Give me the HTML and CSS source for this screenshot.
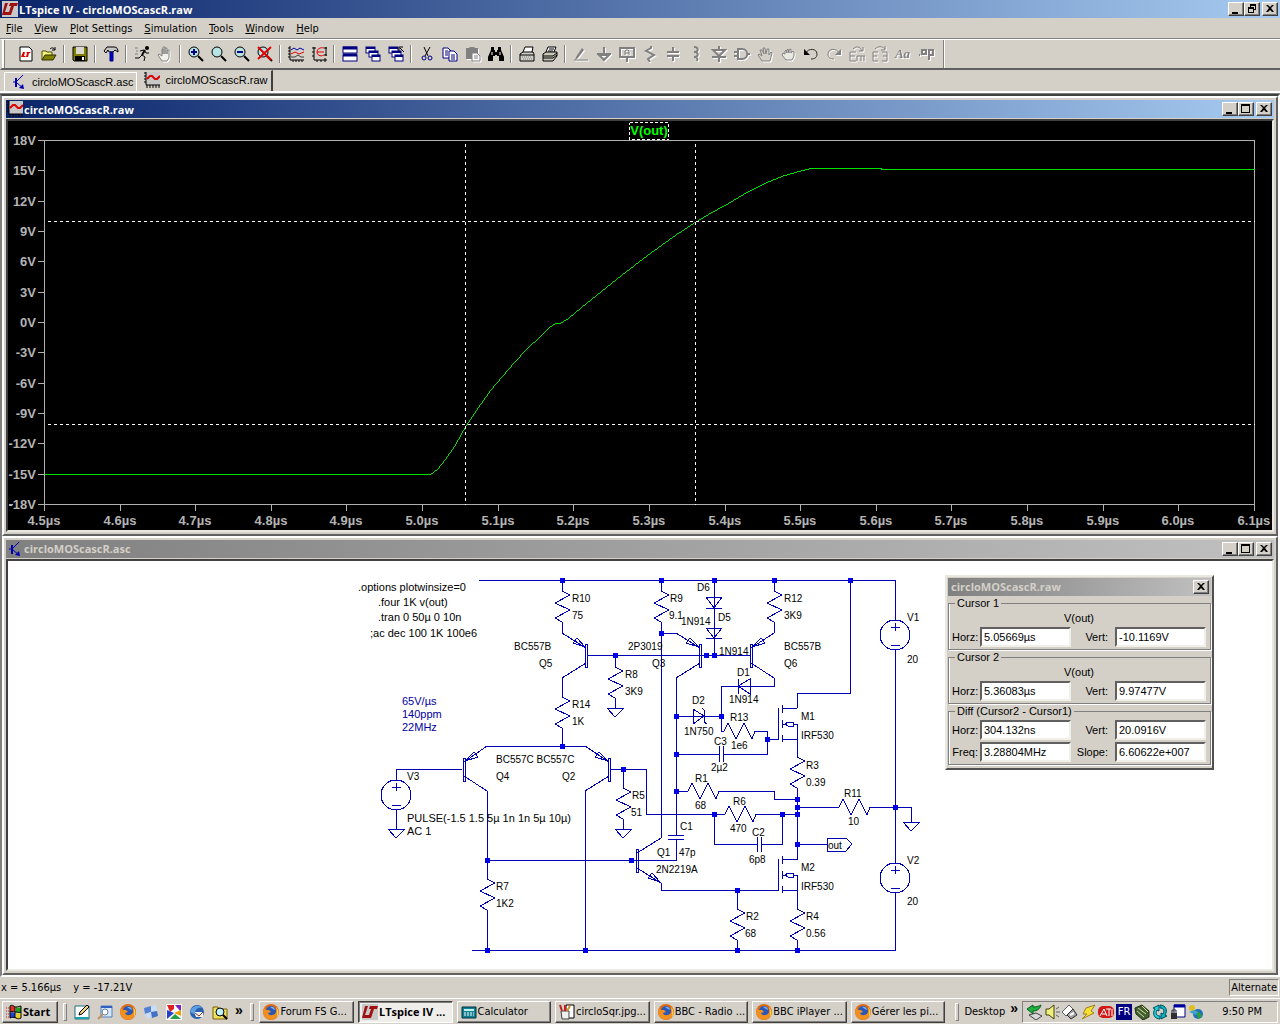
FILE: index.html
```html
<!DOCTYPE html>
<html lang="en">
<head>
    <meta charset="UTF-8">
    <meta name="viewport" content="width=device-width, initial-scale=1.0">
    <title>LTspice IV - circloMOScascR.raw</title>
    <link rel="stylesheet" href="styles.css">
</head>
<body>
    <!-- Shared shapes -->
    <svg class="defs" width="0" height="0">
        <symbol id="lt" viewBox="0 0 16 16"><rect width="16" height="16" fill="#c8c8c8"/><path d="M3 2h3L3 11h4l-1 3H0zM8 2h8l-1 3h-3l-3 9H6l3-9H7z" fill="#a01010"/></symbol>
        <symbol id="wave" viewBox="0 0 16 16"><rect x="2" width="14" height="13" fill="#c8c8c8"/><path d="M2 0v13h14M0 1h2M0 4h2M0 7h2M0 10h2M3 13v3M6 13v3M9 13v3M12 13v3M15 13v3" stroke="#000" fill="none"/><path d="M3 7l3-3h2l3 3h2l3-3" stroke="#e00000" stroke-width="2" fill="none"/></symbol>
        <symbol id="bjt" viewBox="0 0 16 16"><path d="M5 4v9" stroke="#0000b0" stroke-width="2"/><path d="M2 8h4M6 7l6-6M6 9l6 5" stroke="#0000b0" fill="none"/><path d="M13 15l-5-1 4-4z" fill="#0000b0"/></symbol>
        <symbol id="i-min" viewBox="0 0 12 10"><path d="M2 8h6v2H2z"/></symbol>
        <symbol id="i-max" viewBox="0 0 12 10"><path d="M1 0h9v9H1zM2 2v6h7V2z" fill-rule="evenodd"/></symbol>
        <symbol id="i-restore" viewBox="0 0 12 10"><path d="M4 0h6v6H8V5h1V2H5v1H4zM2 3h6v6H2zM3 5v3h4V5z" fill-rule="evenodd"/></symbol>
        <symbol id="i-close" viewBox="0 0 12 10"><path d="M2 1h2l2 2 2-2h2L7 4l3 4H8L6 6 4 8H2l3-4z"/></symbol>
        <symbol id="fox" viewBox="0 0 16 16"><circle cx="8" cy="8" r="8" fill="#e06a10"/><circle cx="8" cy="7" r="5" fill="#2a58b8"/><path d="M7 3c3-1 5 1 5 3l-2-1z" fill="#7ab4f0"/><path d="M1 4l2 2 3 0 2 2-3 1c1 3 5 3 8 0 1-2 1-4 0-6 3 3 3 8 0 11-4 3-10 2-12-2C0 9 0 6 1 4z" fill="#f09020"/><path d="M13 3c3 3 3 7 1 10 0-4 0-7-1-10z" fill="#ffd040"/></symbol>
        <symbol id="mag" viewBox="0 0 16 16"><circle cx="6" cy="6" r="5" fill="#b8e4e4" stroke="#000"/><path d="M10 10l5 5" stroke="#000" stroke-width="2"/></symbol>
        <symbol id="cascade" viewBox="0 0 16 16"><g fill="#fff" stroke="#000080"><rect x="1" y="1" width="9" height="6"/><path d="M1 2h9" stroke-width="2"/><rect x="4" y="5" width="9" height="6"/><path d="M4 6h9" stroke-width="2"/><rect x="7" y="9" width="8" height="6"/><path d="M7 10h8" stroke-width="2"/></g></symbol>
        <symbol id="hand" viewBox="0 0 16 16"><path d="M5 15L1 9l1-1 3 2-2-6 2 0 2 4-1-6h2l1 6 1-5h2l0 6 2-3 1 1-2 8z" fill="#d4d0c8" stroke="#808080"/></symbol>
        <symbol id="res-v" overflow="visible"><path d="M0 0L8 4L-7 12L8 19L-7 27L0 31"/></symbol>
        <symbol id="res-h" overflow="visible"><path d="M0 0L4 -8L12 8L20 -8L28 8L31 0"/></symbol>
        <symbol id="gnd" overflow="visible"><path d="M-8 0H9L0 9Z"/></symbol>
        <symbol id="bar" overflow="visible"><path d="M-1 -11H1V12H-1Z"/></symbol>
        <symbol id="src" overflow="visible"><circle r="15"/><path d="M-4 -8H5M0 -12V-4M-4 10H5"/></symbol>
        <symbol id="mos" overflow="visible"><path d="M-19 -16V15H-30M-15 -19V-11M-15 -4V4M-15 11V18M-15 -16H0M-15 15H0V0H-4M-15 0H-10M-12 0L-9 -2H-4V2H-9Z"/></symbol>
    </svg>

    <header class="titlebar">
        <svg class="icon"><use href="#lt"/></svg>
        <span class="title">LTspice IV - circloMOScascR.raw</span>
        <button class="ctl" aria-label="Minimize"><svg><use href="#i-min"/></svg></button>
        <button class="ctl" aria-label="Restore"><svg><use href="#i-restore"/></svg></button>
        <button class="ctl ctl-close" aria-label="Close"><svg><use href="#i-close"/></svg></button>
    </header>

    <nav class="menubar">
        <button><u>F</u>ile</button>
        <button><u>V</u>iew</button>
        <button><u>P</u>lot Settings</button>
        <button><u>S</u>imulation</button>
        <button><u>T</u>ools</button>
        <button><u>W</u>indow</button>
        <button><u>H</u>elp</button>
    </nav>

    <!-- Toolbar -->
    <div class="toolbar">
        <button aria-label="New schematic"><svg viewBox="0 0 16 16"><path d="M2 1h9l3 3v11H2z" fill="#fff" stroke="#000"/><path d="M5 6h2l-1 4h2l-1 1H3zM8 6h5l-1 1h-1l-1 4H8l1-4z" fill="#e00000"/></svg></button>
        <button aria-label="Open"><svg viewBox="0 0 16 16"><path d="M1 14V5h4l1 1h5v3" fill="#f0f080" stroke="#505000"/><path d="M1 14l3-5h11l-3 5z" fill="#808000" stroke="#303000"/><path d="M9 3c2-2 4-1 5 1M14 1v3h-3" fill="none" stroke="#000"/></svg></button>
        <span class="sep"></span>
        <button aria-label="Save"><svg viewBox="0 0 16 16"><path d="M1 1h14v14H2l-1-1z" fill="#808000" stroke="#000"/><path d="M4 1h8v7H4z" fill="#d8d8d0"/><path d="M3 10h10v5H3z" fill="#000"/><path d="M10 11h2v3h-2z" fill="#fff"/></svg></button>
        <span class="sep"></span>
        <button aria-label="Control panel"><svg viewBox="0 0 16 16"><path d="M1 5l3-4h7c3 0 4 2 4 5l-3-2-2 2H6L5 4 3 7z" fill="#c8c8c8" stroke="#000"/><path d="M7 6h3v9H7z" fill="#0000d0" stroke="#000080"/></svg></button>
        <span class="sep"></span>
        <button aria-label="Run"><svg viewBox="0 0 16 16"><circle cx="13" cy="2" r="2"/><path d="M11 4L8 9" stroke="#000" stroke-width="2"/><path d="M6 5l4-1 2 3h3M8 9l3 2-1 4M8 9l-3 3H1" fill="none" stroke="#000"/><path d="M1 2h3M2 5h2M1 8h3" stroke="#808080"/></svg></button>
        <button class="off" aria-label="Halt"><svg viewBox="0 0 16 16"><path d="M5 15L1 9l1-1 3 2V3h1v5V1h2v7-6h2v6-4h2v8l-2 3z" fill="#f0f0e8" stroke="#808080"/></svg></button>
        <span class="sep"></span>
        <button aria-label="Zoom in"><svg viewBox="0 0 16 16"><use href="#mag"/><path d="M3 6h6M6 3v6" stroke="#000080" stroke-width="2"/></svg></button>
        <button aria-label="Pan"><svg viewBox="0 0 16 16"><use href="#mag"/></svg></button>
        <button aria-label="Zoom back"><svg viewBox="0 0 16 16"><use href="#mag"/><path d="M3 6h6" stroke="#000080" stroke-width="2"/></svg></button>
        <button aria-label="Zoom full extents"><svg viewBox="0 0 16 16"><use href="#mag"/><path d="M1 1l13 13M14 1L1 13" stroke="#e00000" stroke-width="2"/></svg></button>
        <span class="sep"></span>
        <button aria-label="Autorange"><svg viewBox="0 0 16 16"><path d="M2 0v14h14M0 2h2M0 5h2M0 8h2M0 11h2M5 14v2M8 14v2M11 14v2M14 14v2" fill="none" stroke="#000"/><path d="M3 4l3-2 3 2 3-2 4 2" fill="none" stroke="#0000b0"/><path d="M3 8l4-2 4 2 5-2" fill="none" stroke="#e00000"/><path d="M3 11h4l3-2 3 2h3" fill="none" stroke="#404040"/></svg></button>
        <button aria-label="Set limits"><svg viewBox="0 0 16 16"><path d="M3 1v13h13M1 2h4M1 6h2M1 10h2M6 14v2M10 14v2M14 12v4M15 1v9M13 2h3M13 9h3" fill="none" stroke="#000"/><path d="M13 2c-4-1-7 1-7 4s3 5 7 3M6 6h7" fill="none" stroke="#e00000"/></svg></button>
        <span class="sep"></span>
        <button aria-label="Tile windows"><svg viewBox="0 0 16 16"><g fill="#fff" stroke="#000080"><rect x="1" y="1" width="14" height="6"/><path d="M1 2h14" stroke-width="3"/><rect x="1" y="9" width="14" height="6"/><path d="M1 9h14" stroke-width="3"/></g></svg></button>
        <button aria-label="Cascade windows"><svg viewBox="0 0 16 16"><use href="#cascade"/></svg></button>
        <button aria-label="Close all"><svg viewBox="0 0 16 16"><use href="#cascade"/><path d="M16 6l-4-4M11 5V1h4" fill="none" stroke="#000"/></svg></button>
        <span class="sep"></span>
        <button aria-label="Cut"><svg viewBox="0 0 16 16"><path d="M5 1l4 9M11 1L6 10" stroke="#000"/><circle cx="5" cy="12" r="2" fill="none" stroke="#000080"/><circle cx="11" cy="12" r="2" fill="none" stroke="#000080"/></svg></button>
        <button aria-label="Copy"><svg viewBox="0 0 16 16"><g fill="#fff" stroke="#000080"><path d="M1 2h5l3 3v7H1z"/><path d="M7 5h5l3 3v7H7z"/></g><path d="M3 5h3M3 7h3M3 9h3M9 9h4M9 11h4M9 13h4" stroke="#000080"/></svg></button>
        <button class="off" aria-label="Paste"><svg viewBox="0 0 16 16"><path d="M1 2h3l1-1h4l1 1h3v11H1z" fill="#808080"/><path d="M7 7h5l3 3v5H7z" fill="#fff" stroke="#808080"/><path d="M9 10h4M9 12h4" stroke="#808080"/></svg></button>
        <button aria-label="Find"><svg viewBox="0 0 16 16"><path d="M3 1h3v3h1v2h2V4h1V1h3v3l3 7v4h-5v-5H9V9H7v1H5v5H0v-4l3-7z"/><path d="M4 6v3M12 6v3" stroke="#fff"/></svg></button>
        <span class="sep"></span>
        <button aria-label="Print setup"><svg viewBox="0 0 16 16"><path d="M4 6l2-5h8l-1 5" fill="#fff" stroke="#000"/><path d="M1 8l3-2h10l1 2v7H1z" fill="#d0d0c8" stroke="#000"/><path d="M1 9h14" stroke="#000"/><path d="M3 11h10M4 13h9" stroke="#808080" stroke-dasharray="1 1"/></svg></button>
        <button aria-label="Print"><svg viewBox="0 0 16 16"><path d="M4 6l2-5h8l-2 5" fill="#fff" stroke="#000"/><path d="M1 8l3-2h11v4l-4 5H1z" fill="#c8c8b8" stroke="#000"/><path d="M1 10h10l4-3M1 12h10l4-3" fill="none" stroke="#000"/><path d="M7 3h5M6 5h5" stroke="#000"/></svg></button>
        <span class="sep"></span>
        <button class="off" aria-label="Wire"><svg viewBox="0 0 16 16"><path d="M3 11l6-9 2 2-6 8-3 2z" fill="#808080"/><path d="M1 14h14" stroke="#808080"/></svg></button>
        <button class="off" aria-label="Ground"><svg viewBox="0 0 16 16"><path d="M8 1v7M1 8h14M3 9h10l-5 5z" fill="none" stroke="#808080" stroke-width="2"/></svg></button>
        <button class="off" aria-label="Label net"><svg viewBox="0 0 16 16"><path d="M1 2h14v9H1zM8 11v5" fill="none" stroke="#808080" stroke-width="2"/><path d="M6 9V5l1-1h2l1 1v4M6 7h4" fill="none" stroke="#808080"/></svg></button>
        <button class="off" aria-label="Resistor"><svg viewBox="0 0 16 16"><path d="M9 0v2L4 5l8 4-6 4 2 3" fill="none" stroke="#808080" stroke-width="2"/></svg></button>
        <button class="off" aria-label="Capacitor"><svg viewBox="0 0 16 16"><path d="M8 1v5M8 10v5M2 6h12M2 10h12" stroke="#808080" stroke-width="2"/></svg></button>
        <button class="off" aria-label="Inductor"><svg viewBox="0 0 16 16"><path d="M6 1c5 0 5 5 0 5 5 0 5 5 0 5 3 0 4 2 3 4" fill="none" stroke="#808080" stroke-width="2"/></svg></button>
        <button class="off" aria-label="Diode"><svg viewBox="0 0 16 16"><path d="M8 0v4M2 4h12l-6 6zM1 11h14M8 11v5" fill="none" stroke="#808080" stroke-width="2"/></svg></button>
        <button class="off" aria-label="Component"><svg viewBox="0 0 16 16"><path d="M4 3h4c7 0 7 10 0 10H4zM0 6h4M0 10h4M13 8h3" fill="none" stroke="#808080" stroke-width="2"/></svg></button>
        <button class="off" aria-label="Move"><svg viewBox="0 0 16 16"><use href="#hand"/></svg></button>
        <button class="off" aria-label="Drag"><svg viewBox="0 0 16 16"><path d="M6 14L2 9l1-2 2 1V5l1-1 1 3V4l1-1 1 4V4l2-1v4l1-2 2 1v4l-2 4z" fill="#e8e8e0" stroke="#808080"/></svg></button>
        <button aria-label="Undo"><svg viewBox="0 0 16 16"><path d="M3 7c2-5 11-5 11 1 0 4-3 5-6 5" fill="none" stroke="#303020"/><path d="M1 3v6h6z"/></svg></button>
        <button class="off" aria-label="Redo"><svg viewBox="0 0 16 16"><path d="M13 7C11 2 2 2 2 8c0 4 3 5 6 5" fill="none" stroke="#808080"/><path d="M15 3v6H9z" fill="#808080"/></svg></button>
        <button class="off" aria-label="Rotate"><svg viewBox="0 0 16 16"><path d="M7 6H1v9h6M1 10h5M8 10h8M8 10v5M12 10v5M15 10v5M4 3c3-3 7-3 9 2M14 1v4h-4" fill="none" stroke="#808080"/></svg></button>
        <button class="off" aria-label="Mirror"><svg viewBox="0 0 16 16"><path d="M6 6H1v9h5M1 10h4M10 6h5v9h-5M15 10h-4M3 3c3-3 7-3 10 0M13 0v4h-4" fill="none" stroke="#808080"/></svg></button>
        <button class="off aa">Aa</button>
        <button class="off" aria-label="SPICE directive"><svg viewBox="0 0 16 16"><path d="M1 9h1M4 4h4v4H4zM11 14V4h4v5h-4" fill="none" stroke="#808080" stroke-width="2"/></svg></button>
        <span class="sep sep-end"></span>
    </div>

    <div class="tabs">
        <button class="tab"><svg class="icon"><use href="#bjt"/></svg>circloMOScascR.asc</button>
        <button class="tab active"><svg class="icon"><use href="#wave"/></svg>circloMOScascR.raw</button>
    </div>

    <main class="mdi">
        <!-- Waveform window -->
        <section class="window win-plot">
            <div class="titlebar">
                <svg class="icon"><use href="#wave"/></svg>
                <span class="title">circloMOScascR.raw</span>
                <button class="ctl" aria-label="Minimize"><svg><use href="#i-min"/></svg></button>
                <button class="ctl" aria-label="Maximize"><svg><use href="#i-max"/></svg></button>
                <button class="ctl ctl-close" aria-label="Close"><svg><use href="#i-close"/></svg></button>
            </div>
            <div class="client">
                <svg class="plot" viewBox="7 120 1264 409" preserveAspectRatio="xMinYMin meet">
                    <path class="axis" d="M37 140H1254V504H8M44 140V510M1254 504V510M37 170H44M37 201H44M37 231H44M37 261H44M37 292H44M37 322H44M37 352H44M37 383H44M37 413H44M37 443H44M37 474H44M120 504V510M195 504V510M271 504V510M346 504V510M422 504V510M498 504V510M573 504V510M649 504V510M725 504V510M800 504V510M876 504V510M951 504V510M1027 504V510M1103 504V510M1178 504V510"/>
                    <g class="ylabels">
                        <text x="35" y="144">18V</text>
                        <text x="35" y="174">15V</text>
                        <text x="35" y="205">12V</text>
                        <text x="35" y="235">9V</text>
                        <text x="35" y="265">6V</text>
                        <text x="35" y="296">3V</text>
                        <text x="35" y="326">0V</text>
                        <text x="35" y="356">-3V</text>
                        <text x="35" y="387">-6V</text>
                        <text x="35" y="417">-9V</text>
                        <text x="35" y="447">-12V</text>
                        <text x="35" y="478">-15V</text>
                        <rect x="12" y="500" width="25" height="8"/>
                        <text x="35" y="508">-18V</text>
                    </g>
                    <g class="xlabels">
                        <text x="43" y="524">4.5µs</text>
                        <text x="119" y="524">4.6µs</text>
                        <text x="194" y="524">4.7µs</text>
                        <text x="270" y="524">4.8µs</text>
                        <text x="345" y="524">4.9µs</text>
                        <text x="421" y="524">5.0µs</text>
                        <text x="497" y="524">5.1µs</text>
                        <text x="572" y="524">5.2µs</text>
                        <text x="648" y="524">5.3µs</text>
                        <text x="724" y="524">5.4µs</text>
                        <text x="799" y="524">5.5µs</text>
                        <text x="875" y="524">5.6µs</text>
                        <text x="950" y="524">5.7µs</text>
                        <text x="1026" y="524">5.8µs</text>
                        <text x="1102" y="524">5.9µs</text>
                        <text x="1177" y="524">6.0µs</text>
                        <text x="1253" y="524">6.1µs</text>
                    </g>
                    <path class="trace" d="M44 474H428L432 472L437 468L444 459L452 448L459 436L465 425L472 415L480 403L490 389L502 375L514 361L526 348L538 337L548 327L554 323L560 322L567 318L580 307L600 291L625 271L650 252L675 234L695 221L710 212L725 204L745 192L765 182L782 175L800 170L808 168H881V169H1254"/>
                    <path class="cursor" d="M465 143V504M695 143V504M47 221H1254M47 424H1254"/>
                    <rect class="trace-box" x="629" y="122" width="39" height="17"/>
                    <text class="trace-name" x="648" y="134">V(out)</text>
                </svg>
            </div>
        </section>

        <!-- Schematic window -->
        <section class="window win-schematic">
            <div class="titlebar inactive">
                <svg class="icon"><use href="#bjt"/></svg>
                <span class="title">circloMOScascR.asc</span>
                <button class="ctl" aria-label="Minimize"><svg><use href="#i-min"/></svg></button>
                <button class="ctl" aria-label="Maximize"><svg><use href="#i-max"/></svg></button>
                <button class="ctl ctl-close" aria-label="Close"><svg><use href="#i-close"/></svg></button>
            </div>
            <div class="client">
                <svg class="schematic" viewBox="8 561 1264 408" preserveAspectRatio="xMinYMin meet">
                    <g class="wires">
                        <path d="M479 580H895V620M895 650V863M895 893V950H472"/>
                        <path d="M562 580V591M562 622V633L586 648M586 663L562 678V697M562 728V746M487 746H585L609 762M464 762L487 746"/>
                        <path d="M587 655H750M615 655V667M615 698V708"/>
                        <path d="M661 580V591M661 622V838L637 853M661 633H676L700 648M700 663L676 678V835M676 839V860H487"/>
                        <path d="M714 580V655M774 580V591M774 622V633L751 648M751 663L774 678V686H721V731H724M755 731H767V754H723M719 754H676M767 739H778M676 716H721"/>
                        <path d="M797 708V693H850V580M797 739V757M797 788V860"/>
                        <path d="M396 780V769H462M396 810V829M464 776L487 791V879M487 910V950M609 776L585 791V950"/>
                        <path d="M610 769H646V814H725M756 814H797M623 769V788M623 819V829"/>
                        <path d="M637 868L661 883V890H778M737 890V909M737 940V950M797 890V909M797 940V950"/>
                        <path d="M676 791H688M719 791H774V799H797M714 814V844H757M761 844H782V814"/>
                        <path d="M797 807H839M870 807H911V822M797 844H827"/>
                    </g>
                    <g class="parts">
                        <use href="#res-v" x="562" y="591"/><use href="#res-v" x="562" y="697"/>
                        <use href="#res-v" x="661" y="591"/><use href="#res-v" x="774" y="591"/>
                        <use href="#res-v" x="615" y="667"/><use href="#res-v" x="623" y="788"/>
                        <use href="#res-v" x="487" y="879"/><use href="#res-v" x="797" y="757"/>
                        <use href="#res-v" x="737" y="909"/><use href="#res-v" x="797" y="909"/>
                        <use href="#res-h" x="724" y="731"/><use href="#res-h" x="688" y="791"/>
                        <use href="#res-h" x="725" y="814"/><use href="#res-h" x="839" y="807"/>
                        <use href="#gnd" x="615" y="708"/><use href="#gnd" x="623" y="829"/>
                        <use href="#gnd" x="396" y="829"/><use href="#gnd" x="911" y="822"/>
                        <use href="#bar" x="586" y="655"/><use href="#bar" x="700" y="655"/>
                        <use href="#bar" x="751" y="655"/><use href="#bar" x="464" y="769"/>
                        <use href="#bar" x="609" y="769"/><use href="#bar" x="637" y="860"/>
                        <use href="#src" x="396" y="795"/><use href="#src" x="895" y="635"/>
                        <use href="#src" x="895" y="878"/>
                        <use href="#mos" x="797" y="724"/><use href="#mos" x="797" y="875"/>
                        <!-- emitter arrows -->
                        <path d="M585 647L573 643L577 638ZM699 647L686 643L690 638ZM752 647L765 643L761 638ZM465 761L478 757L474 752ZM608 761L595 757L599 752ZM660 882L648 878L652 873Z"/>
                        <!-- diodes -->
                        <path d="M706 597H722L714 608ZM706 608H722M706 628H722L714 638ZM706 638H722M750 679V694L738 686ZM738 679V694M693 709V724L704 716ZM702 708L704 710V722L707 724"/>
                        <!-- capacitors and port -->
                        <path d="M719 746V762M723 746V762M757 837V852M761 837V852M668 835H684M668 839H684M827 838H846L852 844L846 851H827Z"/>
                    </g>
                    <path class="nodes" d="M562 580h0M661 580h0M714 580h0M774 580h0M850 580h0M661 633h0M615 655h0M706 655h0M714 655h0M676 716h0M721 716h0M767 739h0M676 754h0M562 746h0M623 769h0M676 791h0M797 799h0M797 807h0M895 807h0M797 814h0M714 814h0M782 814h0M797 844h0M487 860h0M631 860h0M737 890h0M487 950h0M585 950h0M737 950h0M797 950h0"/>
                    <g class="directives">
                        <text x="358" y="591">.options plotwinsize=0</text>
                        <text x="378" y="606">.four 1K v(out)</text>
                        <text x="378" y="621">.tran 0 50µ 0 10n</text>
                        <text x="370" y="637">;ac dec 100 1K 100e6</text>
                        <text x="407" y="822">PULSE(-1.5 1.5 5µ 1n 1n 5µ 10µ)</text>
                        <text x="407" y="835">AC 1</text>
                    </g>
                    <g class="notes">
                        <text x="402" y="705">65V/µs</text>
                        <text x="402" y="718">140ppm</text>
                        <text x="402" y="731">22MHz</text>
                    </g>
                    <g class="labels">
                        <text x="572" y="602">R10</text><text x="572" y="619">75</text>
                        <text x="514" y="650">BC557B</text><text x="539" y="667">Q5</text>
                        <text x="572" y="708">R14</text><text x="572" y="725">1K</text>
                        <text x="670" y="602">R9</text><text x="669" y="619">9.1</text>
                        <text x="697" y="591">D6</text><text x="681" y="625">1N914</text>
                        <text x="718" y="621">D5</text><text x="719" y="655">1N914</text>
                        <text x="784" y="602">R12</text><text x="784" y="619">3K9</text>
                        <text x="784" y="650">BC557B</text><text x="784" y="667">Q6</text>
                        <text x="628" y="650">2P3019</text><text x="652" y="667">Q3</text>
                        <text x="625" y="678">R8</text><text x="625" y="695">3K9</text>
                        <text x="737" y="676">D1</text><text x="729" y="703">1N914</text>
                        <text x="692" y="704">D2</text><text x="684" y="735">1N750</text>
                        <text x="730" y="721">R13</text><text x="731" y="749">1e6</text>
                        <text x="714" y="745">C3</text><text x="711" y="771">2µ2</text>
                        <text x="801" y="720">M1</text><text x="801" y="739">IRF530</text>
                        <text x="806" y="769">R3</text><text x="806" y="786">0.39</text>
                        <text x="407" y="780">V3</text>
                        <text x="496" y="763">BC557C BC557C</text>
                        <text x="496" y="780">Q4</text><text x="562" y="780">Q2</text>
                        <text x="632" y="799">R5</text><text x="631" y="816">51</text>
                        <text x="496" y="890">R7</text><text x="496" y="907">1K2</text>
                        <text x="657" y="856">Q1</text><text x="656" y="873">2N2219A</text>
                        <text x="695" y="782">R1</text><text x="695" y="809">68</text>
                        <text x="733" y="805">R6</text><text x="730" y="832">470</text>
                        <text x="752" y="836">C2</text><text x="749" y="863">6p8</text>
                        <text x="680" y="830">C1</text><text x="679" y="856">47p</text>
                        <text x="844" y="797">R11</text><text x="848" y="825">10</text>
                        <text x="828" y="849">out</text>
                        <text x="801" y="871">M2</text><text x="801" y="890">IRF530</text>
                        <text x="746" y="920">R2</text><text x="745" y="937">68</text>
                        <text x="806" y="920">R4</text><text x="806" y="937">0.56</text>
                        <text x="907" y="621">V1</text><text x="907" y="663">20</text>
                        <text x="907" y="864">V2</text><text x="907" y="905">20</text>
                    </g>
                </svg>

                <!-- Cursor readout -->
                <form class="dialog">
                    <div class="titlebar inactive">
                        <span class="title">circloMOScascR.raw</span>
                        <button type="button" class="ctl" aria-label="Close"><svg><use href="#i-close"/></svg></button>
                    </div>
                    <fieldset>
                        <legend>Cursor 1</legend>
                        <span class="signal">V(out)</span>
                        <label for="h1">Horz:</label><input id="h1" value="5.05669µs">
                        <label for="v1">Vert:</label><input id="v1" value="-10.1169V">
                    </fieldset>
                    <fieldset>
                        <legend>Cursor 2</legend>
                        <span class="signal">V(out)</span>
                        <label for="h2">Horz:</label><input id="h2" value="5.36083µs">
                        <label for="v2">Vert:</label><input id="v2" value="9.97477V">
                    </fieldset>
                    <fieldset>
                        <legend>Diff (Cursor2 - Cursor1)</legend>
                        <label for="hd">Horz:</label><input id="hd" value="304.132ns">
                        <label for="vd">Vert:</label><input id="vd" value="20.0916V">
                        <label for="fd">Freq:</label><input id="fd" value="3.28804MHz">
                        <label for="sd">Slope:</label><input id="sd" value="6.60622e+007">
                    </fieldset>
                </form>
            </div>
        </section>
    </main>

    <div class="statusbar">
        <span>x = 5.166µs</span>
        <span>y = -17.21V</span>
        <span class="mode">Alternate</span>
    </div>

    <footer class="taskbar">
        <button class="start"><svg class="icon" viewBox="0 0 16 16"><path d="M4 3c2-2 4-1 5 0v5c-2-1-3-1-5 0z" fill="#e03020"/><path d="M10 3c2 1 3 1 5 0v5c-2 1-3 1-5 0z" fill="#20a020"/><path d="M4 9c2-1 3-1 5 0v5c-2-1-3-1-5 0z" fill="#2040d0"/><path d="M10 9c2 1 3 1 5 0v5c-2 1-3 1-5 0z" fill="#e8d020"/><path d="M4 2c3-2 4 1 6 1s4-1 5-1v12c-2 1-3 1-5 0s-4-1-6 0zM9 3v11M4 8c3-1 4 0 6 0s3 1 5 0" fill="none" stroke="#000"/><path d="M0 4h3M0 7h3M0 10h3M0 13h3" stroke="#c02020" stroke-dasharray="1 1"/></svg>Start</button>
        <span class="grip"></span>
        <div class="quick">
            <button aria-label="Show desktop"><svg viewBox="0 0 16 16"><path d="M1 2h14v13H1z" fill="#fff" stroke="#207080"/><path d="M1 13h14v2H1z" fill="#20a0b0"/><path d="M5 11l1-3 7-7 2 2-7 7z" fill="#f0d080" stroke="#000"/></svg></button>
            <button aria-label="Search"><svg viewBox="0 0 16 16"><path d="M4 2h11v11H4z" fill="#d8e8f8" stroke="#5080c0"/><path d="M4 3h11" stroke="#3060c0" stroke-width="2"/><circle cx="8" cy="8" r="3" fill="#fff" stroke="#6080a0"/><path d="M6 10l-5 5" stroke="#c09060" stroke-width="2"/></svg></button>
            <button aria-label="Firefox"><svg><use href="#fox"/></svg></button>
            <button aria-label="Tiles"><svg viewBox="0 0 16 16"><path d="M1 4l7-2v6l-6 2z" fill="#5080d8"/><path d="M8 2l5-1 1 6-6 1z" fill="#c8dcf8"/><path d="M2 10l6-2 1 5-5 2z" fill="#c8dcf8"/><path d="M8 8l6-1 1 5-6 2z" fill="#4070c8"/></svg></button>
            <button aria-label="Colours"><svg viewBox="0 0 16 16"><path d="M0 0h16v16H0z" fill="#fff"/><path d="M1 1h7v4L4 8z" fill="#e02020"/><path d="M9 1h6v7z" fill="#8020c0"/><path d="M1 6l7 3-7 6z" fill="#2040d0"/><path d="M8 9l7-3v6z" fill="#f0a000"/><path d="M4 15l5-5 6 5z" fill="#20a040"/></svg></button>
            <button aria-label="Mail"><svg viewBox="0 0 16 16"><circle cx="8" cy="8" r="7" fill="#2860b0"/><path d="M5 8h9v5H7z" fill="#f0f0f0"/><path d="M1 7c2-5 9-7 12-3-5-1-7 2-7 6-2 0-4-1-5-3z" fill="#60a0e0"/><path d="M6 9l4 3 4-4" fill="none" stroke="#804020"/></svg></button>
            <button aria-label="Find files"><svg viewBox="0 0 16 16"><path d="M1 3h5l1 2h8v10H1z" fill="#f0e060" stroke="#806000"/><circle cx="8" cy="8" r="4" fill="#c0f0f8" stroke="#000"/><path d="M11 11l4 4" stroke="#000" stroke-width="2"/></svg></button>
            <button class="more">»</button>
        </div>
        <span class="grip"></span>
        <div class="tasks">
            <button class="task"><svg class="icon"><use href="#fox"/></svg>Forum FS G...</button>
            <button class="task active"><svg class="icon"><use href="#lt"/></svg>LTspice IV ...</button>
            <button class="task"><svg class="icon" viewBox="0 0 16 16"><path d="M1 3h14v11H1z" fill="#108090" stroke="#003040"/><path d="M3 5h10v2H3z" fill="#c0f0f0"/><path d="M3 9h10M3 11h10" stroke="#fff" stroke-dasharray="2 1"/></svg>Calculator</button>
            <button class="task"><svg class="icon" viewBox="0 0 16 16"><path d="M7 1h8v13H7z" fill="#fff" stroke="#000"/><path d="M2 7h8v8H3z" fill="#f0f0f0" stroke="#404040"/><path d="M3 7L1 1M6 7V1" stroke="#c02020" stroke-width="2"/><path d="M8 7l3-5" stroke="#d09020" stroke-width="2"/></svg>circloSqr.jpg...</button>
            <button class="task"><svg class="icon"><use href="#fox"/></svg>BBC - Radio ...</button>
            <button class="task"><svg class="icon"><use href="#fox"/></svg>BBC iPlayer ...</button>
            <button class="task"><svg class="icon"><use href="#fox"/></svg>Gérer les pi...</button>
        </div>
        <span class="grip"></span>
        <button class="desk">Desktop</button>
        <button class="more">»</button>
        <div class="tray">
            <svg viewBox="0 0 16 16"><path d="M3 11l7-2 6 3-6 4z" fill="#d8d8d8" stroke="#404040"/><path d="M1 5l6-4v2c4 0 6-1 8-2-1 4-4 6-8 6v3z" fill="#20b040" stroke="#006020"/></svg>
            <svg viewBox="0 0 16 16"><path d="M2 5h3l5-4v14l-5-4H2z" fill="#f0f080" stroke="#404000"/><path d="M12 5l3-2M12 8h4M12 11l3 2" stroke="#606060"/></svg>
            <svg viewBox="0 0 16 16"><path d="M0 8l7-7 4 4-7 7z" fill="#fff" stroke="#606060"/><path d="M5 11l6-6 4 6-6 4z" fill="#a0a0a0" stroke="#303030"/><path d="M8 11l4-2" stroke="#fff" stroke-width="2"/></svg>
            <svg viewBox="0 0 16 16"><path d="M15 1L6 4l-3 6h4l-5 5L14 9l-3-2z" fill="#f8e030" stroke="#a08020"/></svg>
            <svg viewBox="0 0 16 16"><rect y="2" width="16" height="12" rx="5" fill="#d01818"/><path d="M2 12l4-7 3 7M4 10h4M8 5h5M11 5v7M14 5v7" fill="none" stroke="#fff"/></svg>
            <span class="lang">FR</span>
            <svg viewBox="0 0 16 16"><path d="M1 4l7-3 7 6v6l-6 3-7-6z" fill="#406030" stroke="#203010"/><path d="M4 4l8 6M3 7l7 6M8 2l6 6" stroke="#d8d8a0" stroke-width="1"/></svg>
            <svg viewBox="0 0 16 16"><path d="M8 1c6 0 8 6 5 10l2 1-6 3V9l2 1c2-4 0-6-3-6z" fill="#10b0c0" stroke="#005060"/><path d="M8 15c-6 0-8-6-5-10L1 4l6-3v6L5 6c-2 4 0 6 3 6z" fill="#20d0d8" stroke="#005060"/></svg>
            <svg viewBox="0 0 16 16"><path d="M4 1h11v12H4z" fill="#fff" stroke="#000080"/><path d="M4 2h11" stroke="#0000a0" stroke-width="3"/><path d="M1 9h6v6H1z" fill="#303030"/><path d="M2 9V6h4v3" fill="none" stroke="#303030"/></svg>
            <svg viewBox="0 0 16 16"><circle cx="10" cy="10" r="5" fill="#2070c0"/><path d="M7 7l4 1 3 4-4 3-1-4z" fill="#30a030"/><circle cx="4" cy="4" r="3" fill="#e0c020"/><path d="M1 8l5-2 4 2-2 3z" fill="#40a0d0"/></svg>
            <span class="clock">9:50 PM</span>
        </div>
    </footer>
</body>
</html>
```
FILE: styles.css
```css
* {
    box-sizing: border-box;
}
body {
    margin: 0;
    height: 100vh;
    display: flex;
    flex-direction: column;
    background-color: #d4d0c8;
    color: #000;
    font: 11px "DejaVu Sans Condensed", "DejaVu Sans", sans-serif;
    overflow: hidden;
}
button {
    font: inherit;
    color: inherit;
    background: none;
    border: 0;
    padding: 0;
    white-space: nowrap;
}
.defs {
    position: absolute;
}
.icon {
    width: 16px;
    height: 16px;
    flex: none;
}

/* Title bars */
.titlebar {
    display: flex;
    align-items: center;
    height: 18px;
    flex: none;
    padding: 0 2px;
    background: linear-gradient(to right, #0a246a, #a6caf0);
    color: #fff;
    font: bold 11px "Open Sans", sans-serif;
}
.titlebar.inactive {
    background: linear-gradient(to right, #808080, #c0c0c0);
    color: #d4d0c8;
}
.title {
    flex: 1;
    padding-left: 1px;
}
.ctl {
    width: 16px;
    height: 14px;
    background-color: #d4d0c8;
    border: 1px solid;
    border-color: #fff #404040 #404040 #fff;
    box-shadow: inset -1px -1px #808080;
    display: flex;
    color: #000;
}
.ctl svg {
    width: 12px;
    height: 10px;
    margin: 1px;
}
.ctl-close {
    margin-left: 2px;
}

/* Menu and toolbar */
.menubar {
    display: flex;
    height: 21px;
    flex: none;
    border-bottom: 1px solid #808080;
}
.menubar button {
    padding: 0 6px;
}
.toolbar {
    display: flex;
    align-items: center;
    height: 31px;
    flex: none;
    padding-left: 12px;
    border-top: 1px solid #fff;
    border-bottom: 2px solid #606060;
    border-left: 2px solid #d4d0c8;
    box-shadow: inset 2px 0 #fff, inset 3px 0 #808080;
}
.toolbar button {
    width: 23px;
    height: 22px;
    display: flex;
    align-items: center;
    justify-content: center;
}
.toolbar svg {
    width: 16px;
    height: 16px;
}
.off svg, .aa {
    filter: drop-shadow(1px 1px 0 #fff);
}
.toolbar .aa {
    color: #808080;
    font: italic bold 13px "Liberation Serif", serif;
}
.sep {
    width: 2px;
    height: 18px;
    margin: 0 3px;
    border-left: 1px solid #808080;
    border-right: 1px solid #fff;
}
.sep-end {
    height: 28px;
    margin-left: 6px;
}
.tabs {
    display: flex;
    align-items: flex-end;
    gap: 3px;
    height: 24px;
    flex: none;
    padding: 0 4px 2px;
    border-bottom: 1px solid #808080;
    box-shadow: inset 0 -2px #fff;
}
.tab {
    display: flex;
    align-items: center;
    gap: 5px;
    height: 19px;
    padding: 0 3px 0 6px;
    font: 11px "Liberation Sans", sans-serif;
    border: 1px solid #fff;
    border-bottom: 0;
}
.tab.active {
    height: 21px;
    padding-left: 3px;
    background-color: #d4d0c8;
    border-color: #d4d0c8;
    border-right: 2px solid #404040;
    padding-bottom: 2px;
}

/* Child windows */
.mdi {
    flex: 1;
    min-height: 0;
    display: flex;
    flex-direction: column;
    border: 2px solid;
    border-color: #404040 #fff #fff #808080;
}
.window {
    display: flex;
    flex-direction: column;
    min-height: 0;
    border: 2px solid;
    border-color: #fff #606060 #606060 #fff;
    padding: 2px;
}
.window > .titlebar {
    height: 19px;
    border-bottom: 1px solid #d4d0c8;
    padding: 0 2px 0 1px;
}
.win-plot {
    flex: 440 1 0;
}
.win-schematic {
    flex: 439 1 0;
}
.client {
    position: relative;
    flex: 1;
    min-height: 0;
    border: 2px solid;
    border-color: #404040 #e8e8e0 #e8e8e0 #404040;
    background-color: #fff;
}
.client > svg {
    display: block;
    width: 100%;
    height: 100%;
}
.win-plot .client {
    background-color: #000;
}

/* Waveform */
.plot {
    font: bold 13px "Liberation Sans", sans-serif;
    fill: #b4b4b4;
}
.plot path {
    fill: none;
    shape-rendering: crispEdges;
}
.axis {
    stroke: #b0b0b0;
}
.ylabels {
    text-anchor: end;
}
.ylabels rect {
    fill: #000;
}
.xlabels, .trace-name {
    text-anchor: middle;
}
.trace {
    stroke: #00e000;
}
.cursor {
    stroke: #fff;
    stroke-dasharray: 3 3;
}
.trace-box {
    fill: none;
    stroke: #fff;
    stroke-dasharray: 3 2;
    shape-rendering: crispEdges;
}
.trace-name {
    fill: #00ff00;
}

/* Schematic */
.schematic {
    font: 11px "Liberation Sans", sans-serif;
}
.wires, .parts {
    fill: none;
    stroke: #0000b4;
    shape-rendering: crispEdges;
}
.nodes {
    stroke: #0000e8;
    stroke-width: 5;
    stroke-linecap: square;
    shape-rendering: crispEdges;
}
.notes {
    fill: #0000a0;
}
.labels {
    font-size: 10px;
}

/* Cursor readout */
.dialog {
    position: absolute;
    top: 14px;
    right: 58px;
    width: 269px;
    padding: 1px 1px 2px;
    background-color: #d4d0c8;
    border: 2px solid;
    border-color: #e8e8e0 #505050 #505050 #e8e8e0;
    font: 11px "Liberation Sans", sans-serif;
}
.dialog .titlebar {
    margin-bottom: 1px;
}
fieldset {
    display: grid;
    grid-template-columns: 26px 91px minmax(0, 1fr) 91px;
    align-items: center;
    gap: 2px;
    margin: 0 0 1px;
    padding: 2px 4px 2px 3px;
    border: 1px solid #808080;
    box-shadow: inset 1px 0 #fff, 1px 1px #fff;
}
legend {
    margin-left: 3px;
    padding: 0 2px;
    line-height: 13px;
}
fieldset label {
    text-align: right;
    white-space: nowrap;
}
fieldset label:nth-of-type(even) {
    padding-right: 5px;
}
.signal {
    grid-column: 1 / -1;
    text-align: center;
    line-height: 13px;
}
fieldset input {
    width: 100%;
    height: 20px;
    padding: 0 2px;
    font: inherit;
    border: 2px solid;
    border-color: #606060 #f0f0e8 #f0f0e8 #606060;
    background-color: #fff;
}

/* Status bar and taskbar */
.statusbar {
    display: flex;
    align-items: center;
    gap: 12px;
    height: 21px;
    flex: none;
    padding: 0 1px;
}
.mode {
    margin-left: auto;
    padding: 1px 1px;
    border: 1px solid;
    border-color: #808080 #fff #fff #808080;
}
.taskbar {
    display: flex;
    align-items: center;
    height: 26px;
    flex: none;
    padding: 0 2px;
    border-top: 1px solid #fff;
}
.start, .task {
    display: flex;
    align-items: center;
    height: 22px;
    border: 1px solid;
    border-color: #fff #404040 #404040 #fff;
    box-shadow: inset -1px -1px #808080;
    overflow: hidden;
}
.start {
    width: 56px;
    padding-left: 3px;
    gap: 1px;
    font: bold 11px "Open Sans", sans-serif;
}
.grip {
    width: 4px;
    height: 18px;
    margin: 0 5px;
    border: 1px solid;
    border-color: #fff #808080 #808080 #fff;
}
.quick {
    display: flex;
    gap: 7px;
    padding-left: 2px;
    margin-right: auto;
}
.quick svg {
    display: block;
    width: 16px;
    height: 16px;
}
.more {
    font: bold 14px "Liberation Sans", sans-serif;
    line-height: 12px;
    align-self: flex-start;
}
.taskbar > .more {
    margin: 3px 4px 0 5px;
}
.tasks {
    display: flex;
    gap: 4px;
    width: 686px;
    margin-right: 5px;
}
.task {
    flex: 1 1 0;
    min-width: 0;
    padding-left: 3px;
    gap: 1px;
}
.task.active {
    border-color: #404040 #fff #fff #404040;
    box-shadow: inset 1px 1px #808080;
    background-color: #f0eeea;
    font: bold 11px "Open Sans", sans-serif;
}
.tray {
    display: flex;
    align-items: center;
    gap: 2px;
    height: 22px;
    width: 256px;
    padding: 0 15px 0 3px;
    border: 1px solid;
    border-color: #808080 #fff #fff #808080;
}
.tray svg {
    width: 16px;
    height: 16px;
    flex: none;
}
.lang {
    width: 16px;
    line-height: 16px;
    text-align: center;
    background-color: #000080;
    color: #fff;
}
.clock {
    margin-left: auto;
    white-space: nowrap;
}
```
